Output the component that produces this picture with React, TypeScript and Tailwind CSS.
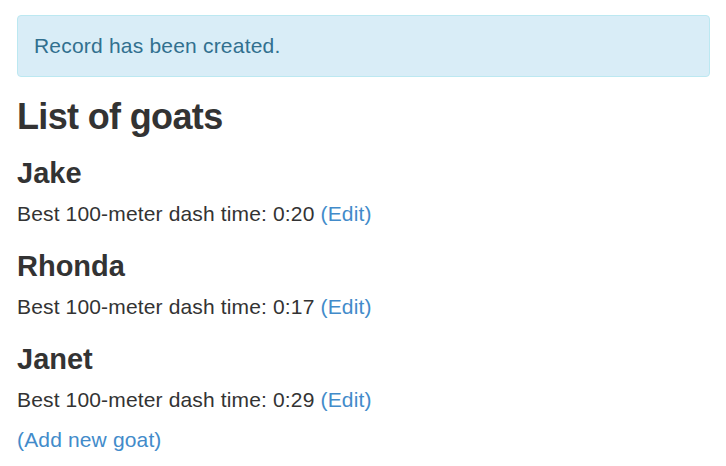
const goats = [
  { name: "Jake", time: "0:20" },
  { name: "Rhonda", time: "0:17" },
  { name: "Janet", time: "0:29" },
];

export default function App() {
  return (
    <main
      className="min-h-screen bg-white pl-[17px] pr-[16px] pt-[15px] text-[#333333]"
      style={{ fontFamily: '"Liberation Sans", Arial, sans-serif' }}
    >
      <div className="rounded-[4px] border border-[#bce8f1] bg-[#d9edf7] px-[16px] py-[15px] text-[21px] leading-[30px] tracking-[0.2px] text-[#31708f]">
        Record has been created.
      </div>

      <h1 className="mt-[18px] text-[36px] font-bold leading-[44px] tracking-[-0.65px]">
        List of goats
      </h1>

      <div className="mt-[16px]">
        {goats.map((goat, i) => (
          <div key={goat.name} className={i > 0 ? "mt-[19px]" : ""}>
            <h3 className="text-[29px] font-bold leading-[36px]">{goat.name}</h3>
            <p className="mt-[8px] text-[21px] leading-[30px] tracking-[0.15px]">
              Best 100-meter dash time: {goat.time}{" "}
              <a href="#" className="text-[#428bca]">
                (Edit)
              </a>
            </p>
          </div>
        ))}
      </div>

      <p className="mt-[10px] text-[21px] leading-[30px] tracking-[0.15px]">
        <a href="#" className="text-[#428bca]">
          (Add new goat)
        </a>
      </p>
    </main>
  );
}
